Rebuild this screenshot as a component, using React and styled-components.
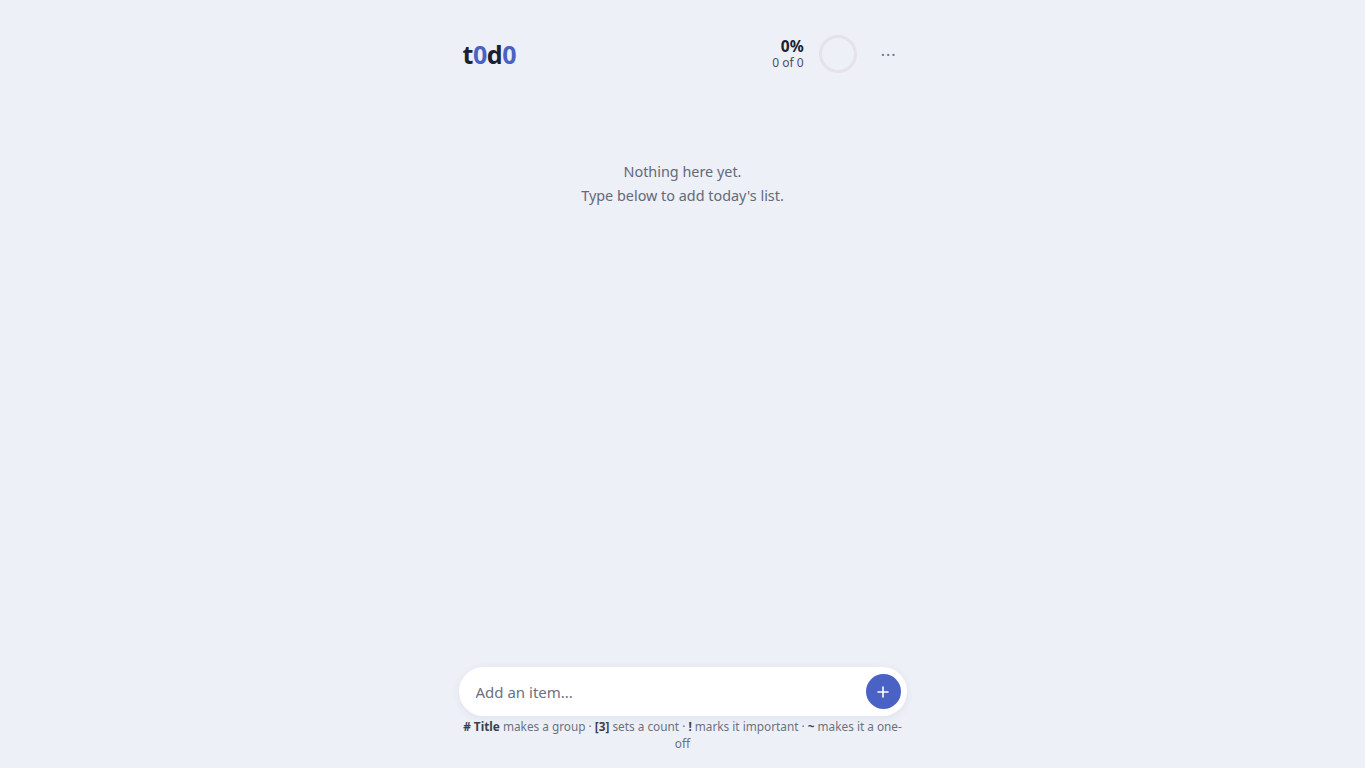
import React, { useState } from 'react'
import styled, { createGlobalStyle } from 'styled-components'

const GlobalStyle = createGlobalStyle`
  * { box-sizing: border-box; }
  body {
    margin: 0;
    background: #edf0f7;
    font-family: "Noto Sans", "Open Sans", sans-serif;
    color: #1f2430;
  }
`

const Page = styled.div`
  display: flex;
  flex-direction: column;
  height: 100vh;
  width: 448px;
  margin: 0 auto;
`

const Header = styled.header`
  display: flex;
  align-items: center;
  justify-content: space-between;
  padding: 35px 4px 0 4px;
  height: 73px;
`

const Logo = styled.h1`
  margin: 0;
  font-size: 25px;
  font-weight: 700;
  letter-spacing: -0.4px;
  color: #1c2130;
  span { color: #4a62c4; }
`

const Right = styled.div`
  display: flex;
  align-items: center;
`

const Stats = styled.div`
  display: flex;
  flex-direction: column;
  align-items: flex-end;
  margin-right: 14px;
`

const Pct = styled.div`
  font-size: 15.5px;
  font-weight: 700;
  line-height: 16px;
  color: #1c2130;
`

const Count = styled.div`
  font-size: 12px;
  line-height: 15px;
  margin-top: 1px;
  color: #4b5160;
`

const Ring = styled.svg`
  width: 40px;
  height: 40px;
  display: block;
`

const MenuButton = styled.button`
  border: none;
  background: none;
  color: #6b7280;
  font-size: 16px;
  letter-spacing: 1px;
  padding: 0 6px;
  margin-left: 17px;
  cursor: pointer;
  font-family: inherit;
  line-height: 1;
  margin-top: 2px;
`

const Main = styled.main`
  flex: 1;
  padding-top: 87px;
  text-align: center;
`

const Empty = styled.p`
  margin: 0;
  font-size: 14.4px;
  line-height: 24px;
  color: #636977;
`

const Footer = styled.footer`
  padding-bottom: 16px;
`

const Bar = styled.form`
  display: flex;
  align-items: center;
  height: 49px;
  background: #fff;
  border-radius: 25px;
  padding: 0 6px 0 15px;
  box-shadow: 0 2px 10px rgba(40, 50, 90, 0.07);
`

const Input = styled.input`
  flex: 1;
  border: none;
  outline: none;
  background: transparent;
  font-family: inherit;
  font-size: 15px;
  color: #1f2430;
  &::placeholder { color: #6b7080; }
`

const AddButton = styled.button`
  width: 35px;
  height: 35px;
  border-radius: 50%;
  border: none;
  background: #4a62c4;
  color: #fff;
  display: flex;
  align-items: center;
  justify-content: center;
  padding: 0;
  cursor: pointer;
`

const Hint = styled.p`
  margin: 2px 0 0;
  font-size: 11.8px;
  line-height: 17px;
  text-align: center;
  color: #6b7080;
  b { color: #3a3f4c; font-weight: 700; }
`

export default function App() {
  const [text, setText] = useState('')
  return (
    <>
      <GlobalStyle />
      <Page>
        <Header>
          <Logo>t<span>0</span>d<span>0</span></Logo>
          <Right>
            <Stats>
              <Pct>0%</Pct>
              <Count>0 of 0</Count>
            </Stats>
            <Ring viewBox="0 0 40 40">
              <circle cx="20" cy="20" r="17.5" fill="none" stroke="#e6e2eb" strokeWidth="3" />
            </Ring>
            <MenuButton aria-label="menu">···</MenuButton>
          </Right>
        </Header>
        <Main>
          <Empty>Nothing here yet.</Empty>
          <Empty>Type below to add today's list.</Empty>
        </Main>
        <Footer>
          <Bar onSubmit={e => { e.preventDefault(); setText('') }}>
            <Input placeholder="Add an item..." value={text} onChange={e => setText(e.target.value)} />
            <AddButton type="submit" aria-label="add">
              <svg width="12" height="12" viewBox="0 0 12 12">
                <path d="M6 1v10M1 6h10" stroke="#fff" strokeWidth="1.6" strokeLinecap="round" />
              </svg>
            </AddButton>
          </Bar>
          <Hint>
            <b># Title</b> makes a group · <b>[3]</b> sets a count · <b>!</b> marks it important · <b>~</b> makes it a one-off
          </Hint>
        </Footer>
      </Page>
    </>
  )
}
